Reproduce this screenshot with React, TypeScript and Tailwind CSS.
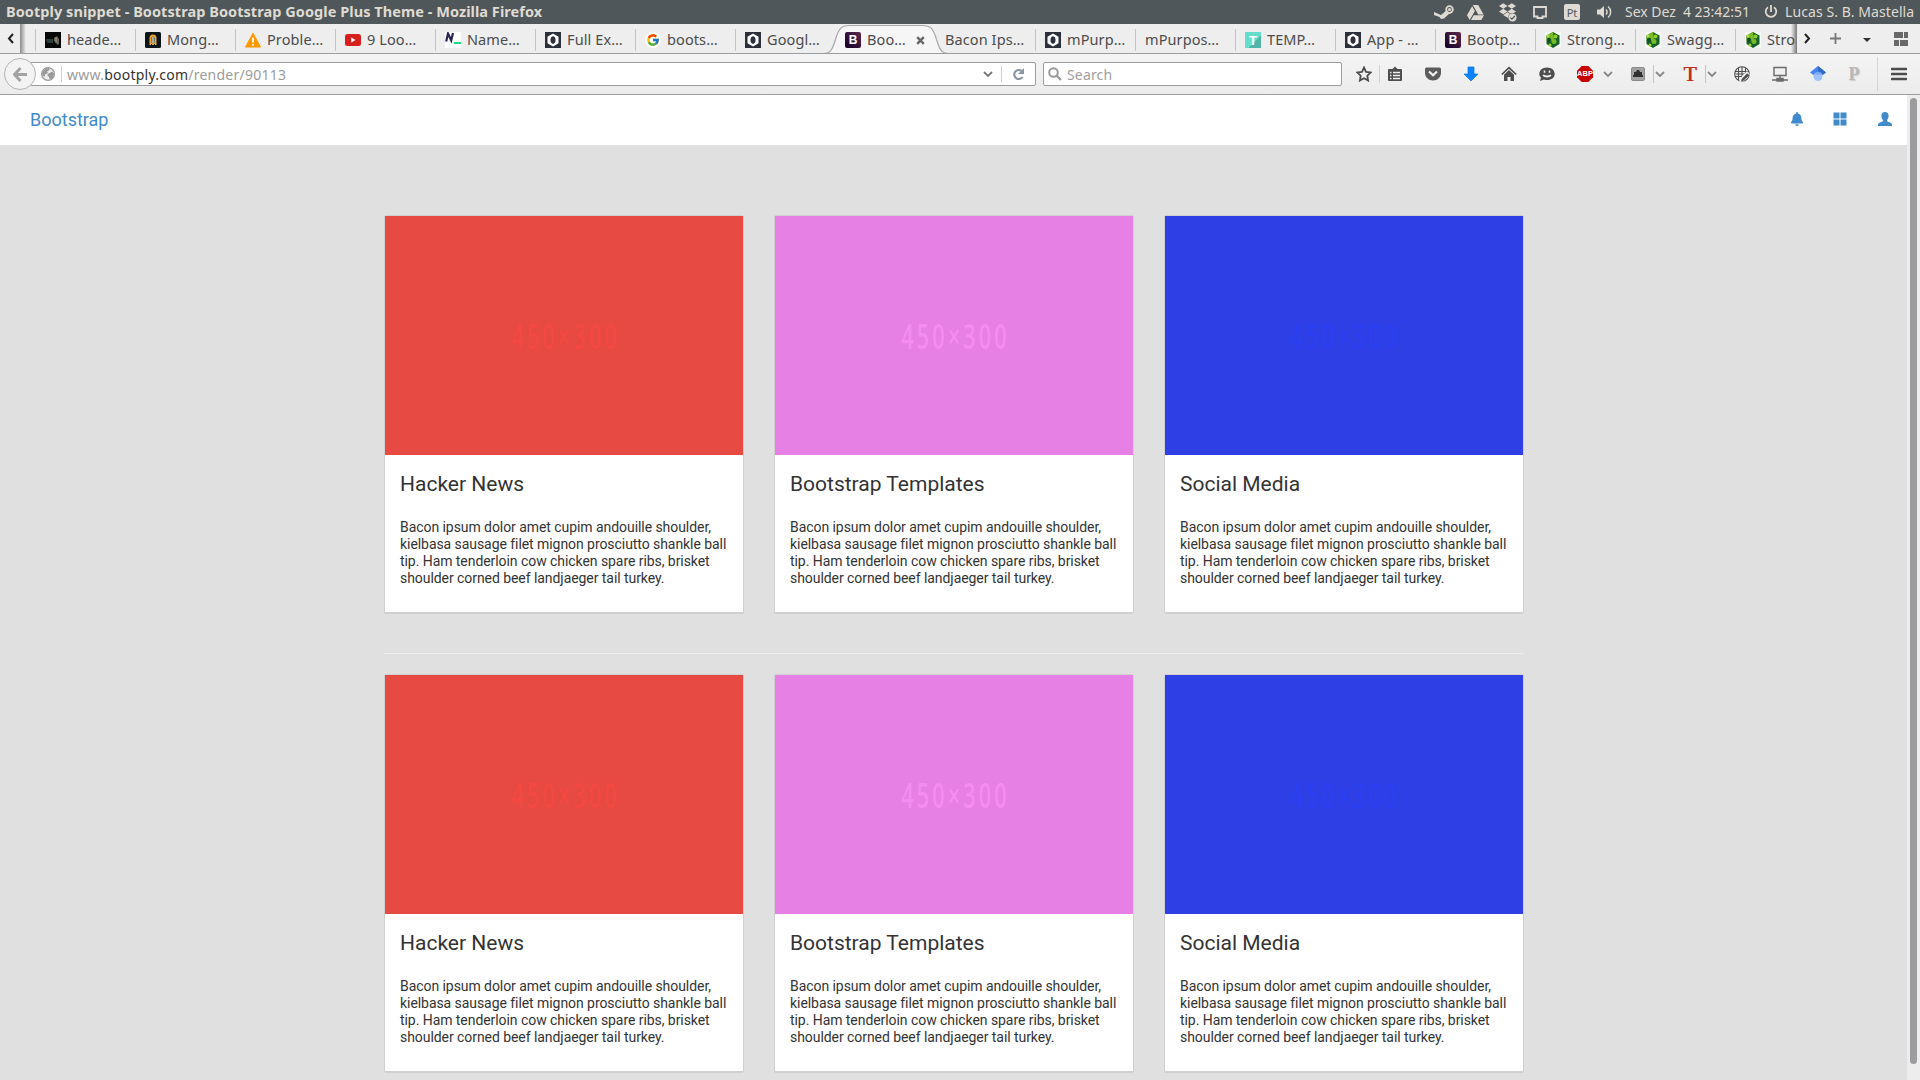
import type { ReactNode } from "react";
import { FaBell, FaDropbox, FaGoogleDrive } from "react-icons/fa";
import { FcGoogle } from "react-icons/fc";

type IconName =
  | "header"
  | "mongo"
  | "warning"
  | "youtube"
  | "name"
  | "codepen"
  | "google"
  | "bootply"
  | "template"
  | "strong"
  | "none";

const tabs: { icon: IconName; title: string; active?: boolean }[] = [
  { icon: "header", title: "heade…" },
  { icon: "mongo", title: "Mong…" },
  { icon: "warning", title: "Proble…" },
  { icon: "youtube", title: "9 Loo…" },
  { icon: "name", title: "Name…" },
  { icon: "codepen", title: "Full Ex…" },
  { icon: "google", title: "boots…" },
  { icon: "codepen", title: "Googl…" },
  { icon: "bootply", title: "Boo…", active: true },
  { icon: "none", title: "Bacon Ips…" },
  { icon: "codepen", title: "mPurp…" },
  { icon: "none", title: "mPurpos…" },
  { icon: "template", title: "TEMP…" },
  { icon: "codepen", title: "App - …" },
  { icon: "bootply", title: "Bootp…" },
  { icon: "strong", title: "Strong…" },
  { icon: "strong", title: "Swagg…" },
  { icon: "strong", title: "Stro" },
];

const cards = [
  { title: "Hacker News", bg: "bg-[#e64a42]", label: "text-[#f44842]" },
  { title: "Bootstrap Templates", bg: "bg-[#e680e4]", label: "text-[#f48cf2]" },
  { title: "Social Media", bg: "bg-[#2d3fe5]", label: "text-[#2c40f2]" },
];

function Svg({ children, size = 16 }: { children: ReactNode; size?: number }) {
  return (
    <svg width={size} height={size} viewBox="0 0 16 16" className="block shrink-0">
      {children}
    </svg>
  );
}

function Favicon({ name }: { name: IconName }) {
  switch (name) {
    case "header":
      return (
        <Svg>
          <rect width="16" height="16" fill="#050807" />
          <path d="M1 8h7M2 10h6" stroke="#4d7770" strokeWidth="1" />
          <path d="M9 6l3-2 2 3v5l-2 1-1-3-2-1z" fill="#6b6254" />
          <path d="M11 5v6" stroke="#9f9a8b" strokeWidth="1" />
        </Svg>
      );
    case "mongo":
      return (
        <Svg>
          <rect width="16" height="16" rx="1.5" fill="#0b1418" />
          <path d="M4.500 13V6a3.500 3.500 0 0 1 7 0v7z" fill="#f0a52c" />
          <rect x="6.300" y="4.500" width="3.400" height="7" rx="1.700" fill="#35658b" />
          <path d="M8 5v6" stroke="#ffe0a0" strokeWidth="1.200" />
          <path d="M6.500 12v1.500M9.500 12v1.500" stroke="#0b1418" />
        </Svg>
      );
    case "warning":
      return (
        <Svg>
          <path d="M8 1.200L15.500 15H.5z" fill="#ff9800" stroke="#ff9800" strokeLinejoin="round" />
          <path d="M8 5.500v5M8 12v1.700" stroke="#fff" strokeWidth="1.800" />
        </Svg>
      );
    case "youtube":
      return (
        <Svg>
          <rect y="2" width="16" height="12" rx="2.500" fill="#d8211f" />
          <path d="M6.200 5.500v5L10.500 8z" fill="#fff" />
        </Svg>
      );
    case "name":
      return (
        <Svg>
          <rect width="16" height="16" fill="#fff" />
          <path d="M1.200 9.500L3 1.500 6.200 8.500 8 1" fill="none" stroke="#2b2353" strokeWidth="2.200" />
          <path d="M9 11h7" stroke="#1fd67f" strokeWidth="2" />
        </Svg>
      );
    case "codepen":
      return (
        <Svg>
          <rect width="16" height="16" fill="#2c303a" />
          <path d="M8 1.500l5.500 3.200v6.600L8 14.500l-5.500-3.200V4.700z" fill="#fff" />
          <path d="M8 4.200c2 .8 2.500 1.600 2.500 3.800S10 11.200 8 12c-2-.8-2.500-1.800-2.500-4S6 5 8 4.200z" fill="#2c303a" />
        </Svg>
      );
    case "google":
      return (
        <span className="flex size-4 shrink-0 items-center justify-center rounded-full bg-white">
          <FcGoogle size={14} />
        </span>
      );
    case "bootply":
      return (
        <span className="flex size-4 shrink-0 items-center justify-center rounded-[2px] bg-linear-to-tr from-[#120027] to-[#5d2a4d] font-['Liberation_Sans'] text-[12px] leading-none font-bold text-white">
          B
        </span>
      );
    case "template":
      return (
        <span className="flex size-4 shrink-0 items-center justify-center bg-linear-to-br from-[#66dccb] from-60% to-[#4fb3a7] to-60% font-['Liberation_Sans'] text-[13px] leading-none font-bold text-white">
          T
        </span>
      );
    case "strong":
      return (
        <Svg>
          <rect width="16" height="16" fill="#f8faf5" />
          <path d="M8 0l6.500 3.500v8.500L8 16l-6.500-4V3.500z" fill="#15602b" />
          <path d="M8 0L1.500 3.500v5L5 10l4-3z" fill="#78bb25" />
          <circle cx="10.500" cy="4.500" r="2" fill="#8fd028" />
          <circle cx="4" cy="8" r="2.200" fill="#0c5125" />
          <circle cx="9" cy="9.500" r="2.500" fill="#75bd25" />
          <circle cx="5" cy="13" r="1.500" fill="#a0d52d" />
          <circle cx="3" cy="4" r="1.400" fill="#b2de54" />
        </Svg>
      );
    default:
      return null;
  }
}

function Chevron({ className = "" }: { className?: string }) {
  return (
    <svg width="10" height="7" viewBox="0 0 10 7" className={`block shrink-0 ${className}`}>
      <path d="M1 1l4 4 4-4" fill="none" stroke="currentColor" strokeWidth="1.800" />
    </svg>
  );
}

function TitleBar() {
  return (
    <header className="flex h-6 items-center bg-[#4f575a] pl-[6px] text-[#dfdbd2]">
      <h1 className="mb-[2px] w-[538px] text-[14.5px] leading-[22px] font-bold tracking-[0.06px] whitespace-nowrap">
        Bootply snippet - Bootstrap Bootstrap Google Plus Theme - Mozilla Firefox
      </h1>
      <div className="ml-[890px] flex items-center">
        {/* steam */}
        <svg width="20" height="15" viewBox="0 0 20 15" className="block">
          <path d="M0 7l7 3 6-5 3 3-6 5.500-3 .5-1.500-2L0 10z" fill="#dfdbd2" />
          <circle cx="15.500" cy="4.500" r="3.300" fill="#4f575a" stroke="#dfdbd2" strokeWidth="1.800" />
          <circle cx="15.500" cy="4.500" r="1.600" fill="#dfdbd2" />
        </svg>
        <FaGoogleDrive size={17} className="ml-[13px]" />
        <span className="relative ml-[15px] block">
          <FaDropbox size={17} className="-mt-[3px] mr-px" />
          <svg width="9" height="9" viewBox="0 0 9 9" className="absolute right-0 -bottom-[3px]">
            <circle cx="4.500" cy="4.500" r="4.300" fill="#dfdbd2" stroke="#4f575a" strokeWidth=".5" />
            <path d="M2.300 4.600l1.600 1.600 3-3.200" fill="none" stroke="#4f575a" strokeWidth="1.200" />
          </svg>
        </span>
        <svg width="14" height="13" viewBox="0 0 14 13" className="ml-[16px]">
          <path d="M1 1h12v9.500H9.500V12h-5v-1.500H1z" fill="none" stroke="currentColor" strokeWidth="1.800" />
        </svg>
        <span className="ml-[17px] flex size-4 items-center justify-center rounded-[2px] bg-[#dfdbd2] text-[11px] leading-none text-[#4f575a]">
          Pt
        </span>
        <svg width="16" height="14" viewBox="0 0 16 14" className="ml-[17px]">
          <path d="M0 4.500h3L7 1v12L3 9.500H0z" fill="currentColor" />
          <path d="M9 4.500a3.500 3.500 0 0 1 0 5M11 1.500a7 7 0 0 1 0 11" fill="none" stroke="currentColor" strokeWidth="1.500" />
        </svg>
      </div>
      <span className="mb-px ml-[12px] w-[124px] text-[14px] leading-5 tracking-[-0.02px] whitespace-pre">
        Sex Dez  4 23:42:51
      </span>
      <svg width="14" height="14" viewBox="0 0 14 14" className="ml-[15px] shrink-0">
        <path d="M4 2.200a5.300 5.300 0 1 0 6 0M7 0v7" fill="none" stroke="currentColor" strokeWidth="1.800" />
      </svg>
      <span className="mb-px ml-[7px] text-[14px] leading-5 tracking-[0.08px] whitespace-nowrap">
        Lucas S. B. Mastella
      </span>
    </header>
  );
}

function TabStrip() {
  return (
    <div className="relative flex h-[30px] overflow-hidden border-b border-[#9b9d9f] bg-[#eeeeee] text-[#4c4c4c]">
      <div className="flex w-[35px] shrink-0 items-center pl-[7px]">
        <svg width="7" height="11" viewBox="0 0 7 11">
          <path d="M6 1L2 5.500 6 10" fill="none" stroke="#222" strokeWidth="2" />
        </svg>
        <span className="ml-[6px] h-[29px] w-[6px] bg-linear-to-r from-[#8c8c8c] to-[#eeeeee]" />
      </div>
      <div className="flex w-[1761px] shrink-0 overflow-hidden">
        {tabs.map((tab, i) => (
          <div key={i} className="relative flex h-[29px] w-[100px] shrink-0 items-center pt-[3px] pl-[10px]">
            {!tab.active && i !== 9 && <span className="absolute top-[5px] left-0 h-[22px] w-px bg-[#c4c4c4]" />}
            <div className="relative z-10 flex items-center gap-[6px]">
              <Favicon name={tab.icon} />
              <span className="mb-[2px] text-[14.5px] leading-4 tracking-[0.1px] whitespace-nowrap">{tab.title}</span>
            </div>
            {tab.active && (
              <svg width="9" height="9" viewBox="0 0 9 9" className="absolute top-[12px] left-[81px] z-10">
                <path d="M1.200 1.200l6.600 6.600M7.800 1.200L1.200 7.800" stroke="#666" strokeWidth="2.400" />
              </svg>
            )}
          </div>
        ))}
      </div>
      {/* outline of the selected tab */}
      <svg width="126" height="30" viewBox="0 0 126 30" className="absolute top-0 left-[823px]">
        <path
          d="M0 29.500C8 29.500 9.500 25 12.500 15.500C15.500 5 18 1.500 27 1.500H99C108 1.500 110.500 5 113.500 15.500C116.500 25 118 29.500 126 29.500"
          fill="#f6f6f6"
          stroke="#a5a8ab"
          strokeWidth="1.200"
        />
      </svg>
      <div className="flex h-[29px] flex-1 items-center">
        <span className="-ml-[5px] h-full w-[6px] bg-linear-to-l from-[#777] to-transparent" />
        <svg width="7" height="11" viewBox="0 0 7 11" className="ml-[7px]">
          <path d="M1 1l4 4.500L1 10" fill="none" stroke="#222" strokeWidth="2" />
        </svg>
        <svg width="11" height="11" viewBox="0 0 11 11" className="ml-[19px]">
          <path d="M5.500 0v11M0 5.500h11" stroke="#777" strokeWidth="1.800" />
        </svg>
        <svg width="8" height="4" viewBox="0 0 8 4" className="mt-[2px] ml-[22px]">
          <path d="M0 0h8L4 4z" fill="#2e3436" />
        </svg>
        <svg width="14" height="14" viewBox="0 0 14 14" className="ml-[23px]">
          <path d="M0 0h9v6H0zM10 0h4v6h-4zM0 8h5v6H0zM6 8h8v6H6z" fill="#686868" />
        </svg>
      </div>
    </div>
  );
}

function Toolbar() {
  return (
    <div className="flex h-[41px] items-center border-b border-[#9b9d9f] bg-linear-to-b from-[#f4f4f4] to-[#ececec] text-[#4d4d4d]">
      <div className="relative z-10 ml-1 flex size-8 shrink-0 items-center justify-center rounded-full border border-[#b0b4b8] bg-[#f3f3f3]">
        <svg width="14" height="15" viewBox="0 0 14 15">
          <path d="M7.500 1L1.500 7.500l6 6.500M2 7.500h12" fill="none" stroke="#a3a3a3" strokeWidth="3" />
        </svg>
      </div>
      <div className="-ml-[6px] flex h-6 w-[1006px] shrink-0 items-center rounded-[2px] border border-[#9b9d9f] bg-white pl-[10px]">
        <Svg size={14}>
          <circle cx="8" cy="8" r="7.300" fill="#ededed" stroke="#999" strokeWidth="1.400" />
          <path d="M2 5l3-3 4-1 1 2-3 2 1 2-3 1-1 3-2-1-1-3zM9 7l4-2 2 3-2 5-3 1-1-3-2-2z" fill="#999" />
        </Svg>
        <span className="ml-[6px] h-4 w-px bg-[#cfcfcf]" />
        <span className="ml-[5px] pt-[2px] text-[14px] leading-5 tracking-[0.24px] text-[#9c9c9c]">
          www.<span className="text-[#333]">bootply.com</span>/render/90113
        </span>
        <Chevron className="ml-auto text-[#777]" />
        <span className="ml-[8px] h-4 w-px bg-[#cfcfcf]" />
        <svg width="13" height="13" viewBox="0 0 13 13" className="mr-[10px] ml-[10px]">
          <path d="M9.800 3.200A4.500 4.500 0 1 0 10.500 9" fill="none" stroke="#8796a3" strokeWidth="2.200" />
          <path d="M12 0v6H6z" fill="#8796a3" />
        </svg>
      </div>
      <div className="ml-[7px] flex h-6 w-[299px] shrink-0 items-center rounded-[2px] border border-[#9b9d9f] bg-white pl-1">
        <svg width="14" height="14" viewBox="0 0 14 14">
          <circle cx="5.500" cy="5.500" r="4.300" fill="none" stroke="#999" strokeWidth="2" />
          <path d="M8.500 8.500L13 13" stroke="#999" strokeWidth="2.300" />
        </svg>
        <span className="ml-[5px] pt-[2px] text-[14px] leading-5 tracking-[0.15px] text-[#a0a0a0]">Search</span>
      </div>
      <div className="ml-[14px] flex flex-1 items-center">
        <Svg>
          <path d="M8 1.500l2 4.300 4.700.6-3.400 3.300.8 4.800L8 12.200l-4.100 2.300.8-4.800L1.300 6.400 6 5.800z" fill="none" stroke="currentColor" strokeWidth="1.800" />
        </Svg>
        <span className="ml-[7px] h-[18px] w-px bg-[#d0d0d0]" />
        <span className="ml-[7px]">
          <Svg>
            <path d="M2 3h3.500L8 .5 10.500 3H14q1 0 1 1v10q0 1-1 1H2q-1 0-1-1V4q0-1 1-1z" fill="currentColor" />
            <path d="M3 6.500h1.500M6 6.500h7M3 9.500h1.500M6 9.500h7M3 12.500h1.500M6 12.500h7" stroke="#f1f1f1" strokeWidth="1.500" />
          </Svg>
        </span>
        <span className="ml-[22px]">
          <Svg>
            <path d="M1.500 1.500h13q1.500 0 1.500 1.500v4c0 4-3.500 7.500-8 7.500S0 11 0 7V3q0-1.500 1.500-1.500z" fill="#5c5c5c" />
            <path d="M4 5.500L8 9.200l4-3.700" fill="none" stroke="#f1f1f1" strokeWidth="2.200" />
          </Svg>
        </span>
        <span className="ml-[22px]">
          <Svg>
            <path d="M5 1h6v7h4l-7 7-7-7h4z" fill="#0a84ff" stroke="#0873dd" strokeWidth=".7" />
          </Svg>
        </span>
        <span className="ml-[22px]">
          <Svg>
            <path d="M.8 8.500L8 1.600l7.200 6.900" fill="none" stroke="currentColor" strokeWidth="1.700" />
            <path d="M3 8.700L8 4l5 4.700V15H9.500v-4h-3v4H3z" fill="currentColor" />
          </Svg>
        </span>
        <span className="ml-[22px]">
          <Svg>
            <path d="M8 1.500c4.500 0 7.700 2.800 7.700 6.500S12.500 14 8 14c-1 0-2-.1-3-.5L1 15l1-3.500C.9 10.500.3 9.500.3 8 .3 4.300 3.500 1.500 8 1.500z" fill="currentColor" />
            <path d="M5.500 4.500v2.300M10.500 4.500v2.300" stroke="#f1f1f1" strokeWidth="1.600" />
            <path d="M4 9.200q4 2.600 8 0" fill="none" stroke="#f1f1f1" strokeWidth="1.800" />
          </Svg>
        </span>
        <span className="relative ml-[22px] flex items-center justify-center">
          <Svg>
            <path d="M4.700 0h6.600L16 4.700v6.600L11.300 16H4.700L0 11.300V4.700z" fill="#c80000" />
          </Svg>
          <span className="absolute font-['Liberation_Sans'] text-[7.500px] leading-none font-bold text-white">ABP</span>
        </span>
        <Chevron className="ml-[10px] text-[#888]" />
        <span className="ml-[17px]">
          <Svg>
            <rect x="1.500" y="1.500" width="13" height="13" rx="1.500" fill="#a2a2a2" stroke="#8b8b8b" />
            <path d="M7 4h2l1 2h2v3h1v2H3V9h1V6h2z" fill="#303030" />
          </Svg>
        </span>
        <span className="ml-[7px] h-[18px] w-px bg-[#c5c5c5]" />
        <Chevron className="ml-[1px] text-[#888]" />
        <span className="ml-[17px] w-4 text-center font-['Liberation_Serif'] text-[22px] leading-[18px] text-[#c32d1d] [text-shadow:0.5px_0_0_#c32d1d]">
          T
        </span>
        <span className="ml-[7px] h-[18px] w-px bg-[#c5c5c5]" />
        <Chevron className="ml-[1px] text-[#888]" />
        <span className="ml-[17px]">
          <Svg>
            <g fill="none" stroke="currentColor" strokeWidth="1.100">
              <circle cx="8" cy="8" r="7.300" />
              <path d="M1 5.500h14M1 10.500h9M8 .7v14.600M1.500 8H15M4.500 2v12M11.500 2v6" />
            </g>
            <path d="M13 5l3 3.500-7 7-4 1 1-4z" fill="#f1f1f1" />
            <path d="M13.300 7.300l2 2-6 5.500-2.300.9.700-2.600z" fill="currentColor" />
          </Svg>
        </span>
        <span className="ml-[22px]">
          <Svg>
            <path d="M2 1.500h12v8H2zM8 10v4M0 14h16M5 12.500h6v2.500H5z" fill="none" stroke="#6a6a6a" strokeWidth="1.400" />
          </Svg>
        </span>
        <span className="ml-[22px]">
          <Svg>
            <path d="M8 0l8 6.500L12.500 9h-9L0 6.500z" fill="#4285f4" />
            <path d="M8 0l8 6.500L12.500 9 8 5z" fill="#356ac3" />
            <circle cx="8" cy="10.500" r="4.500" fill="#a0c3ff" />
            <path d="M3.700 8.500a4.700 4.700 0 0 1 8.600 0z" fill="#76a7fa" />
          </Svg>
        </span>
        <span className="ml-[20px] w-4 text-center font-['Liberation_Serif'] text-[18px] leading-4 font-bold text-[#b8b8b8] [text-shadow:1px_1px_1px_#ccc]">
          P
        </span>
        <span className="ml-[15px] h-[34px] w-px bg-[#d6d6d6]" />
        <svg width="16" height="14" viewBox="0 0 16 14" className="ml-[13px]">
          <path d="M1 2h14M1 7h14M1 12h14" stroke="#4d4d4d" strokeWidth="2.600" strokeLinecap="round" />
        </svg>
      </div>
    </div>
  );
}

function Navbar() {
  return (
    <nav className="flex h-[50px] shrink-0 items-center bg-white pl-[30px] text-[#428bca]">
      <a className="text-[18px] leading-5">Bootstrap</a>
      <div className="mr-[15px] mb-[2px] ml-auto flex items-center">
        <FaBell size={14} />
        <svg width="14" height="14" viewBox="0 0 14 14" className="ml-[29px]">
          <path d="M.5 .5h6v6h-6zM7.500 .5h6v6h-6zM.5 7.500h6v6h-6zM7.500 7.500h6v6h-6z" fill="currentColor" />
        </svg>
        <svg width="14" height="14" viewBox="0 0 14 14" className="ml-[31px]">
          <path d="M7 0c2.400 0 3.600 1.500 3.600 3.800 0 1.800-.7 3.300-1.600 4.300v1.200l4 1.800q1 .5 1 1.500V14H0v-1.400q0-1 1-1.500l4-1.800V8.100c-.9-1-1.600-2.500-1.600-4.300C3.400 1.500 4.600 0 7 0z" fill="currentColor" />
        </svg>
      </div>
    </nav>
  );
}

function CardRow() {
  return (
    <div className="grid grid-cols-3 gap-[30px]">
      {cards.map(({ title, bg, label }) => (
        <article key={title} className="h-[399px] rounded-[2px] border border-b-2 border-[#d0d0d0] bg-white">
          <div className={`flex h-[239px] items-center justify-center ${bg}`}>
            <span className={`scale-x-[0.62] pb-px pl-[5px] font-['Open_Sans'] text-[35px] leading-none font-semibold tracking-[5px] whitespace-nowrap ${label}`}>
              450×300
            </span>
          </div>
          <div className="px-[15px] pt-[17px] text-[#333]">
            <h4 className="text-[21px] leading-6">{title}</h4>
            <p className="mt-[23px] text-[14px] leading-[17px] tracking-[-0.06px] whitespace-nowrap [font-variant-ligatures:common-ligatures]">
              Bacon ipsum dolor amet cupim andouille shoulder,
              <br />
              kielbasa sausage filet mignon prosciutto shankle ball
              <br />
              tip. Ham tenderloin cow chicken spare ribs, brisket
              <br />
              shoulder corned beef landjaeger tail turkey.
            </p>
          </div>
        </article>
      ))}
    </div>
  );
}

export default function App() {
  return (
    <div className="flex h-[1080px] w-[1920px] flex-col overflow-hidden font-['Noto_Sans',sans-serif]">
      <TitleBar />
      <TabStrip />
      <Toolbar />
      <div className="flex min-h-0 flex-1">
        <div className="flex w-[1907px] flex-col overflow-hidden bg-[#e0e0e0] font-['Roboto',sans-serif]">
          <Navbar />
          <main className="mt-[70px] ml-[384px] w-[1140px]">
            <CardRow />
            <hr className="mt-[39px] mb-5 border-t border-[#eeeeee]" />
            <CardRow />
          </main>
        </div>
        <div className="w-[13px] bg-[#ededed] pt-[3px] pl-[3px]">
          <div className="h-[966px] w-[7px] rounded-full bg-[#9c9c9e]" />
        </div>
      </div>
    </div>
  );
}
